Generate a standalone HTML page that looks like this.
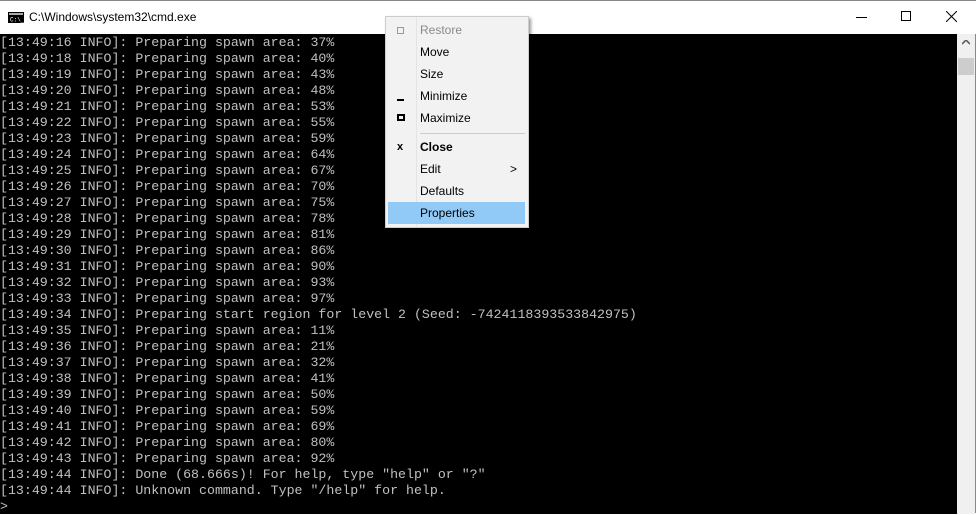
<!DOCTYPE html><html><head><style>
body{margin:0;width:980px;height:513px;overflow:hidden;background:#fff;font-family:"Liberation Sans",sans-serif;position:relative}
.win{position:absolute;left:0;top:0;width:976px;height:513px;border-right:1px solid #888;border-top:1px solid #888;box-sizing:border-box}
.title{position:absolute;left:0;top:0;width:976px;height:33px;background:#fff}
.title span{position:absolute;left:29px;top:9px;font-size:12px;color:#000}
.con{position:absolute;left:0;top:33px;width:957px;height:480px;background:#000;font-family:"Liberation Mono",monospace;font-size:13.27px;line-height:16px;color:#c0c0c0;white-space:pre;padding-top:0.5px;box-sizing:border-box}
.sb{position:absolute;left:957px;top:33px;width:18px;height:480px;background:#f0f0f0}
.menu{position:absolute;left:385px;top:16px;width:142px;height:210px;background:#f2f2f2;border:1px solid #ccc;box-shadow:2px 2px 3px rgba(0,0,0,.4);font-size:12px}
.it{position:absolute;left:34px;height:22px;line-height:22px;color:#000}
</style></head><body>
<div class="win">
<div class="title">
<svg style="position:absolute;left:8px;top:11px" width="16" height="11"><rect x="0" y="0" width="16" height="11" fill="#000"/><rect x="1" y="1" width="14" height="2" fill="#aaa"/><text x="2" y="9.5" font-size="6" fill="#fff" font-family="Liberation Mono">C:\_</text></svg>
<span>C:\Windows\system32\cmd.exe</span>
<div style="position:absolute;left:856px;top:16px;width:11px;height:1px;background:#000"></div>
<div style="position:absolute;left:901px;top:10px;width:8px;height:8px;border:1px solid #000"></div>
<svg style="position:absolute;left:946px;top:10px" width="11" height="11"><path d="M0 0L11 11M11 0L0 11" stroke="#000" stroke-width="1"/></svg>
</div>
<div class="con">[13:49:16 INFO]: Preparing spawn area: 37%
[13:49:18 INFO]: Preparing spawn area: 40%
[13:49:19 INFO]: Preparing spawn area: 43%
[13:49:20 INFO]: Preparing spawn area: 48%
[13:49:21 INFO]: Preparing spawn area: 53%
[13:49:22 INFO]: Preparing spawn area: 55%
[13:49:23 INFO]: Preparing spawn area: 59%
[13:49:24 INFO]: Preparing spawn area: 64%
[13:49:25 INFO]: Preparing spawn area: 67%
[13:49:26 INFO]: Preparing spawn area: 70%
[13:49:27 INFO]: Preparing spawn area: 75%
[13:49:28 INFO]: Preparing spawn area: 78%
[13:49:29 INFO]: Preparing spawn area: 81%
[13:49:30 INFO]: Preparing spawn area: 86%
[13:49:31 INFO]: Preparing spawn area: 90%
[13:49:32 INFO]: Preparing spawn area: 93%
[13:49:33 INFO]: Preparing spawn area: 97%
[13:49:34 INFO]: Preparing start region for level 2 (Seed: -7424118393533842975)
[13:49:35 INFO]: Preparing spawn area: 11%
[13:49:36 INFO]: Preparing spawn area: 21%
[13:49:37 INFO]: Preparing spawn area: 32%
[13:49:38 INFO]: Preparing spawn area: 41%
[13:49:39 INFO]: Preparing spawn area: 50%
[13:49:40 INFO]: Preparing spawn area: 59%
[13:49:41 INFO]: Preparing spawn area: 69%
[13:49:42 INFO]: Preparing spawn area: 80%
[13:49:43 INFO]: Preparing spawn area: 92%
[13:49:44 INFO]: Done (68.666s)! For help, type "help" or "?"
[13:49:44 INFO]: Unknown command. Type "/help" for help.
&gt;</div>
<div class="sb">
<svg style="position:absolute;left:5px;top:6px" width="8" height="5"><path d="M0 4L4 0L8 4" stroke="#606060" stroke-width="1.6" fill="none"/></svg>
<div style="position:absolute;left:1px;top:24px;width:16px;height:17px;background:#cdcdcd"></div>
</div>
</div>
<div class="menu">
<div style="position:absolute;left:30px;top:0;width:1px;height:210px;background:#e4e4e4"></div>
<div style="position:absolute;left:2px;top:185px;width:137px;height:22px;background:#91c9f7"></div>
<div style="position:absolute;left:11px;top:10px;width:5px;height:5px;border:1px solid #999"></div>
<div class="it" style="top:2px;color:#8a8a8a">Restore</div>
<div class="it" style="top:24px">Move</div>
<div class="it" style="top:46px">Size</div>
<div style="position:absolute;left:11px;top:82px;width:7px;height:2px;background:#000"></div>
<div class="it" style="top:68px">Minimize</div>
<div style="position:absolute;left:11px;top:97px;width:4px;height:3px;border:2px solid #000"></div>
<div class="it" style="top:90px">Maximize</div>
<div style="position:absolute;left:34px;top:116px;width:105px;height:1px;background:#ccc"></div>
<div style="position:absolute;left:11px;top:124px;font-size:11px;font-weight:bold">x</div>
<div class="it" style="top:119px;font-weight:bold">Close</div>
<div class="it" style="top:141px">Edit</div>
<div style="position:absolute;left:124px;top:141px;line-height:22px;font-size:12px">&gt;</div>
<div class="it" style="top:163px">Defaults</div>
<div class="it" style="top:185px">Properties</div>
</div>
</body></html>
